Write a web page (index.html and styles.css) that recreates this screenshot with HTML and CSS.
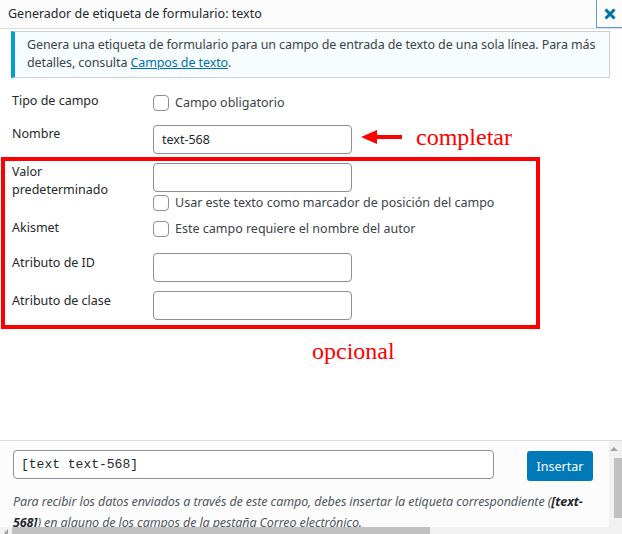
FILE: index.html
```html
<!DOCTYPE html>
<html lang="es">
<head>
  <meta charset="UTF-8" />
  <meta name="viewport" content="width=device-width, initial-scale=1.0"/>
  <title>Generador de etiqueta de formulario: texto</title>
  <link rel="stylesheet" href="styles.css">
</head>
<body>
  <div class="dialog">
    <header class="titlebar">
      <h1>Generador de etiqueta de formulario: texto</h1>
      <button class="close" aria-label="Cerrar">
        <svg width="12" height="12" viewBox="0 0 12 12"><path d="M1.5 1.5 L10.5 10.5 M10.5 1.5 L1.5 10.5" stroke="#0073aa" stroke-width="3"/></svg>
      </button>
    </header>

    <main class="content">
      <div class="notice">
        <p>Genera una etiqueta de formulario para un campo de entrada de texto de una sola línea. Para más detalles, consulta <a href="#">Campos de texto</a>.</p>
      </div>

      <div class="form">
        <div class="row row-tipo">
          <div class="label">Tipo de campo</div>
          <label class="check"><span class="box"></span>Campo obligatorio</label>
        </div>

        <div class="row row-nombre">
          <div class="label">Nombre</div>
          <input type="text" class="text" value="text-568">
          <div class="hint">
            <svg width="42" height="16" viewBox="0 0 42 16"><polygon points="0,8 16,1 16,15" fill="#f00"/><rect x="15" y="6" width="26" height="4" fill="#f00"/></svg>
            <span>completar</span>
          </div>
        </div>

        <div class="optional">
          <div class="row row-valor">
            <div class="label">Valor<br>predeterminado</div>
            <div class="field">
              <input type="text" class="text">
              <label class="check"><span class="box"></span>Usar este texto como marcador de posición del campo</label>
            </div>
          </div>
          <div class="row row-akismet">
            <div class="label">Akismet</div>
            <label class="check"><span class="box"></span>Este campo requiere el nombre del autor</label>
          </div>
          <div class="row row-id">
            <div class="label">Atributo de ID</div>
            <input type="text" class="text">
          </div>
          <div class="row row-clase">
            <div class="label">Atributo de clase</div>
            <input type="text" class="text">
          </div>
        </div>
        <div class="opcional">opcional</div>
      </div>
    </main>

    <footer class="insert-box">
      <div class="scroll-row">
        <div class="scroll-area">
          <div class="tag-row">
            <input type="text" class="tag" value="[text text-568]" readonly>
            <button class="insert">Insertar</button>
          </div>
          <p class="mail-tip">Para recibir los datos enviados a través de este campo, debes insertar la etiqueta correspondiente (<strong>[text-568]</strong>) en alguno de los campos de la pestaña Correo electrónico.</p>
        </div>
        <div class="vscroll">
          <span class="arrow-up"></span>
          <span class="vthumb"></span>
        </div>
      </div>
      <div class="hscroll">
        <span class="arrow-left"></span>
        <span class="hthumb"></span>
      </div>
    </footer>
  </div>
</body>
</html>
```

FILE: styles.css
```css
html, body {
  margin: 0;
  height: 100%;
  overflow: hidden;
  background: #fff;
}
body {
  font-family: "Noto Sans", sans-serif;
  font-size: 12.5px;
  color: #23282d;
}
.dialog {
  display: flex;
  flex-direction: column;
  height: 534px;
}
.titlebar {
  display: flex;
  justify-content: space-between;
  height: 28px;
  background: #fcfcfc;
  border-bottom: 1px solid #dddddd;
}
.titlebar h1 {
  margin: 0;
  padding-left: 8px;
  font-size: 12.5px;
  font-weight: 400;
  line-height: 28px;
}
.close {
  width: 26px;
  height: 28px;
  padding: 0;
  border: none;
  border-left: 1px solid #5b9dd9;
  border-bottom: 1px solid #5b9dd9;
  background: #fcfcfc;
  display: flex;
  align-items: center;
  justify-content: center;
}
.content {
  flex: 1;
}
.notice {
  margin: 2px 12px 0 11px;
  background: #f7fcfe;
  border: 1px solid #ccd0d4;
  border-left: 4px solid #00a0d2;
  padding: 4px 6px 5px 12px;
}
.notice p {
  margin: 0;
  line-height: 18px;
  color: #3c434a;
  letter-spacing: -0.1px;
}
.notice a {
  color: #0073aa;
}
.form {
  padding-top: 16px;
}
.row {
  display: flex;
  align-items: flex-start;
  padding-left: 12px;
}
.label {
  width: 141px;
  flex: none;
  line-height: 18px;
}
.check {
  display: flex;
  align-items: center;
  gap: 6px;
  line-height: 18px;
  color: #3c434a;
}
.box {
  width: 14px;
  height: 14px;
  border: 1px solid #8c8f94;
  border-radius: 4px;
  background: #fff;
  flex: none;
}
.text {
  width: 199px;
  height: 29px;
  box-sizing: border-box;
  border: 1px solid #8c8f94;
  border-radius: 4px;
  padding: 0 8px;
  font-family: inherit;
  font-size: 12.5px;
  color: #23282d;
  margin: 0;
}
.row-tipo {
  margin-bottom: 13px;
}
.row-tipo .label {
  margin-top: -2px;
}
.hint {
  display: flex;
  align-items: center;
  gap: 13px;
  margin-left: 9px;
  margin-top: 1px;
  color: #f00;
  font-family: "Liberation Serif", serif;
  font-size: 24px;
  line-height: 22px;
}
.optional {
  margin-top: 3px;
  width: 531px;
  margin-left: 1px;
  border: 4px solid #f00;
  padding: 2px 0 5px;
}
.optional .row {
  padding-left: 7px;
}
.field {
  display: flex;
  flex-direction: column;
  gap: 3px;
}
.field .check {
  line-height: 16px;
}
.row-akismet {
  margin-top: 9px;
}
.row-akismet .label {
  margin-top: -1px;
}
.row-id {
  margin-top: 15px;
}
.row-id .label,
.row-clase .label {
  margin-top: 1px;
}
.row-clase {
  margin-top: 9px;
}
.opcional {
  margin: 9px 0 0 312px;
  color: #f00;
  font-family: "Liberation Serif", serif;
  font-size: 24px;
  line-height: 26px;
}
.insert-box {
  border-top: 1px solid #dddddd;
  background: #fcfcfc;
  height: 93px;
  overflow: hidden;
}
.scroll-row {
  display: flex;
  height: 86px;
}
.scroll-area {
  flex: 1;
  overflow: hidden;
  padding: 9px 16px 0 13px;
}
.tag-row {
  display: flex;
  justify-content: space-between;
  align-items: flex-start;
}
.tag {
  width: 481px;
  height: 29px;
  box-sizing: border-box;
  border: 1px solid #8c8f94;
  border-radius: 4px;
  padding: 0 7px;
  font-family: "Liberation Mono", monospace;
  font-size: 13px;
  color: #23282d;
  background: #fff;
  margin: 0;
}
.insert {
  width: 66px;
  height: 30px;
  margin-top: 1px;
  border: none;
  border-radius: 3px;
  background: #0079b9;
  color: #fff;
  font-family: inherit;
  font-size: 12.5px;
  padding: 0;
}
.mail-tip {
  margin: 10px -8px 0 0;
  font-style: italic;
  line-height: 21px;
  color: #50575e;
  letter-spacing: -0.1px;
}
.mail-tip strong {
  color: #23282d;
}
.vscroll {
  width: 13px;
  background: #f1f1f1;
  display: flex;
  flex-direction: column;
  align-items: flex-end;
}
.arrow-up {
  margin: 6px 4px 0 0;
  width: 0;
  height: 0;
  border-left: 4px solid transparent;
  border-right: 4px solid transparent;
  border-bottom: 4px solid #a3a3a3;
}
.vthumb {
  margin-top: 7px;
  width: 8px;
  height: 60px;
  background: #c1c1c1;
}
.hscroll {
  display: flex;
  align-items: flex-start;
  height: 7px;
  background: #f1f1f1;
}
.arrow-left {
  margin: 2px 0 0 4px;
  width: 0;
  height: 0;
  border-top: 4px solid transparent;
  border-bottom: 4px solid transparent;
  border-right: 4px solid #a3a3a3;
}
.hthumb {
  margin-left: 4px;
  width: 418px;
  height: 8px;
  background: #c1c1c1;
}
```
